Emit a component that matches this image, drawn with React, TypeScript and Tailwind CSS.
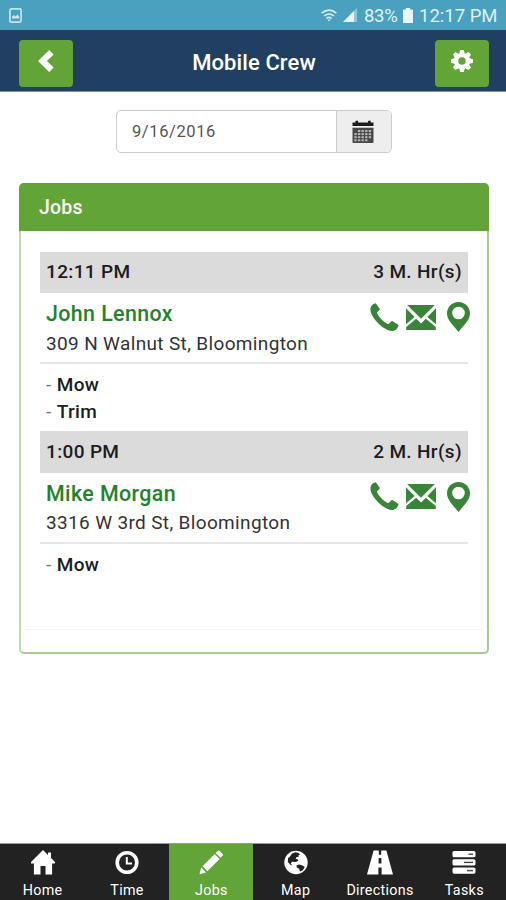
import type { ReactNode } from "react";

function ChevronLeft() {
  return (
    <svg width="16" height="22" viewBox="0 0 16 22" fill="#fff">
      <path d="M11.200 0 15.700 4.400 8.900 11l6.800 6.600L11.200 22 0 11z" />
    </svg>
  );
}

function Gear() {
  return (
    <svg width="22" height="22" viewBox="0 0 22 22">
      <g fill="#fff">
        {[0, 45, 90, 135].map((a) => (
          <path key={a} d="M9.2 0h3.6l.9 3.5v15l-.9 3.5H9.2l-.9-3.5v-15z" transform={`rotate(${a} 11 11)`} />
        ))}
        <circle cx="11" cy="11" r="8" />
      </g>
      <circle cx="11" cy="11" r="3.7" fill="#62a437" />
    </svg>
  );
}

function Calendar() {
  return (
    <svg width="22" height="24" viewBox="0 0 22 24">
      <path d="M.5 2.4h3V.8h2.6v1.6h10V.8h2.6v1.6h2.8V6H.5z" fill="#1c1c1c" />
      <path d="M.5 7.8h21v14.4q0 .8-.8.8H1.3q-.8 0-.8-.8z" fill="#484848" />
      <g fill="#b4b4b4">
        {[0, 1, 2, 3].map((r) =>
          [0, 1, 2, 3, 4].map((c) =>
            (r === 0 && c === 0) || (r === 3 && c === 4) ? null : (
              <rect key={`${r}-${c}`} x={2.3 + c * 3.6} y={10 + r * 3.1} width="2.4" height="2" />
            ),
          ),
        )}
      </g>
    </svg>
  );
}

function Phone() {
  return (
    <svg width="29" height="29" viewBox="0 0 29 29" fill="#398439">
      <path d="M.5 5.200C1 2.600 3 .9 5 .4c.6-.2 1.100 0 1.400.5l3.100 4.700c.4.600.3 1.200-.2 1.600L7.300 8.900c-.4.400-.4.800-.2 1.300 1.800 4 6.300 8.500 10.600 10.700.5.200.9.200 1.300-.2l2.200-2.300c.5-.4 1-.5 1.500-.2l5.200 3.200c.6.400.7.900.5 1.500-.9 2.600-3 4.700-5.700 5.100-3.700.4-9.700-2.800-14.500-7.700C3.300 15.500-.1 9.500.5 5.200z" />
    </svg>
  );
}

function Mail() {
  return (
    <svg width="30" height="25" viewBox="0 0 30 25" fill="#398439">
      <path d="M1.200 0h27.600L15 13.700z" />
      <path d="M0 3.200 8.600 12 0 19.200z" />
      <path d="M30 3.200 21.400 12l8.600 7.200z" />
      <path d="M10.200 13.800 15 18.500l4.800-4.700 10 8.300V25H.2v-2.900z" />
    </svg>
  );
}

function Pin() {
  return (
    <svg width="23" height="30" viewBox="0 0 23 30" fill="#398439" fillRule="evenodd">
      <path d="M11.500 0C5 0 0 5 0 11.300 0 18 5.500 22.500 11.500 30 17.500 22.500 23 18 23 11.300 23 5 18 0 11.500 0zm0 4.700a6.300 6.300 0 1 1 0 12.600 6.300 6.300 0 0 1 0-12.600z" />
    </svg>
  );
}

function HomeIcon() {
  return (
    <svg width="24" height="25" viewBox="0 0 24 25" fill="#fff">
      <path d="M12 0l5 4.900V2.500h3v5.400l4 4.200v1.400h-2.900V24.500h-6.600V16H9.500v8.500H2.900V13.500H0v-1.400z" />
    </svg>
  );
}

function ClockIcon() {
  return (
    <svg width="24" height="25" viewBox="0 0 24 25" fill="none" stroke="#fff">
      <circle cx="12" cy="12.500" r="9.800" strokeWidth="3.600" />
      <path d="M11.800 7v6.500H17" strokeWidth="2" />
    </svg>
  );
}

function PencilIcon() {
  return (
    <svg width="24" height="25" viewBox="0 0 24 25" fill="#fff">
      <path d="M.5 24.300 2.300 17.600 7 22.400z" />
      <path d="M3.500 16.200 15.700 4l4.900 4.900L8.400 21.200z" />
      <path d="M16.700 3 19 .7q.7-.6 1.400 0l3.300 3.400q.6.700 0 1.400l-2.200 2.300z" />
    </svg>
  );
}

function GlobeIcon() {
  return (
    <svg width="24" height="25" viewBox="0 0 24 25">
      <circle cx="12" cy="12.500" r="11.700" fill="#fff" />
      <path d="M8 3.600 11.500 2.300l3 .8 1.600 1.300-1.600.7.3 1.600-2.200.3-.9 1.900 1.800.2.600 2-2.600 1-3.500-.3-1.200 1.600 1.400 1.800-1.600-.2-2.700-3 .2-4.200 1.400-.6z" fill="#222" />
      <path d="M12.600 15.200l3-.7 3.900 1.500 1.200 1.200-2 3-2.600 1.400-1-2.800-2.500-1.500z" fill="#222" />
    </svg>
  );
}

function RoadIcon() {
  return (
    <svg width="26" height="25" viewBox="0 0 26 25" fill="#fff" fillRule="evenodd">
      <path d="M6.600.5h5.200v4.300h2.400V.5h5.200L26 24.500H14.600v-7h-3.200v7H0zM11.700 8l-.2 5.500h3L14.300 8z" />
    </svg>
  );
}

function TasksIcon() {
  return (
    <svg width="24" height="25" viewBox="0 0 24 25">
      <g fill="#fff">
        <rect x=".5" y="1" width="23" height="6.300" rx="1.600" />
        <rect x=".5" y="9.200" width="23" height="6.300" rx="1.600" />
        <rect x=".5" y="17.400" width="23" height="6.300" rx="1.600" />
      </g>
      <g fill="#444">
        <rect x="16.500" y="3.500" width="4.500" height="1.400" />
        <rect x="12" y="11.700" width="9" height="1.400" />
        <rect x="15" y="19.900" width="6" height="1.400" />
      </g>
    </svg>
  );
}

function StatusBar() {
  return (
    <div className="flex h-[30px] items-center bg-[#4aa0bf] pr-[8px] pl-[9px] text-[#dff1f8]">
      <svg width="13" height="15" viewBox="0 0 13 15">
        <rect x=".9" y=".9" width="11.200" height="13.200" rx="1.500" fill="none" stroke="#c7e4ef" strokeWidth="1.700" />
        <path d="M3 10.500V8.500l2-1.500 1.500 1.500 2-2 1.700 2v2z" fill="#c7e4ef" />
      </svg>
      <svg className="ml-auto" width="16" height="13" viewBox="0 0 16 13" fill="none" stroke="#d6ecf5" strokeWidth="1.600">
        <path d="M.6 4.200Q8-2 15.400 4.200M3 7q5-4 10 0M5.300 9.500q2.700-2.200 5.400 0" />
        <path d="M6.500 10.500h3L8 12.500z" fill="#d6ecf5" stroke="none" />
      </svg>
      <svg className="ml-[6px]" width="14" height="14" viewBox="0 0 14 14">
        <path d="M14 0v14H0z" fill="#8fc6da" />
        <path d="M11 3v11H0z" fill="#e6f4fa" />
      </svg>
      <span className="ml-[7px] w-[35px] pt-[2px] text-[18.500px] leading-none tracking-[-0.300px] whitespace-nowrap">83%</span>
      <svg className="ml-[4px]" width="10" height="15" viewBox="0 0 10 15" fill="#eaf6fb">
        <path d="M3 0h4v1.500h3V15H0V1.500h3z" />
      </svg>
      <span className="ml-[6px] w-[79px] pt-[2px] text-[18.500px] leading-none whitespace-nowrap">12:17 PM</span>
    </div>
  );
}

function GreenButton({ label, children }: { label: string; children: ReactNode }) {
  return (
    <button aria-label={label} className="flex h-[47px] w-[54px] items-center justify-center rounded-[4px] bg-[#62a437] pb-[5px]">
      {children}
    </button>
  );
}

type Job = { time: string; hours: string; name: string; address: string; tasks: string[] };

const jobs: Job[] = [
  { time: "12:11 PM", hours: "3 M. Hr(s)", name: "John Lennox", address: "309 N Walnut St, Bloomington", tasks: ["Mow", "Trim"] },
  { time: "1:00 PM", hours: "2 M. Hr(s)", name: "Mike Morgan", address: "3316 W 3rd St, Bloomington", tasks: ["Mow"] },
];

function JobRow({ job }: { job: Job }) {
  return (
    <section>
      <div className="flex h-[41.5px] items-center justify-between bg-[#dbdbdb] px-[6px] text-[19px] font-medium tracking-[0.35px] text-[#1c1c1c]">
        <span>{job.time}</span>
        <span>{job.hours}</span>
      </div>
      <div className="flex h-[71px] justify-between border-b-2 border-[#e6e6e6] pl-[6px]">
        <div className="pt-[7px]">
          <div className="text-[21.4px] leading-[28px] font-medium tracking-[0.4px] text-[#23832a]">{job.name}</div>
          <div className="pt-[0.5px] text-[19px] leading-[30px] tracking-[0.35px] whitespace-nowrap text-[#333]">{job.address}</div>
        </div>
        <div className="mr-[-2px] flex h-[48px] items-center">
          <Phone />
          <div className="ml-[7px]"><Mail /></div>
          <div className="ml-[11px]"><Pin /></div>
        </div>
      </div>
      <ul className="pt-[7px] pb-[6.2px] pl-[6px] text-[19px] leading-[27px] tracking-[0.35px] text-[#1c1c1c]">
        {job.tasks.map((t) => (
          <li key={t}>
            <span className="text-[#777]">- </span>
            <span className="font-medium">{t}</span>
          </li>
        ))}
      </ul>
    </section>
  );
}

const tabs: { label: string; icon: ReactNode }[] = [
  { label: "Home", icon: <HomeIcon /> },
  { label: "Time", icon: <ClockIcon /> },
  { label: "Jobs", icon: <PencilIcon /> },
  { label: "Map", icon: <GlobeIcon /> },
  { label: "Directions", icon: <RoadIcon /> },
  { label: "Tasks", icon: <TasksIcon /> },
];

export default function App() {
  return (
    <div className="flex h-[900px] w-[506px] flex-col overflow-hidden bg-white font-['Roboto',sans-serif]">
      <StatusBar />
      <header className="flex h-[62px] items-start justify-between border-b border-[#7f90a4] bg-[#213f60] pt-[10px] pr-[17px] pl-[19px]">
        <GreenButton label="Back"><ChevronLeft /></GreenButton>
        <h1 className="pt-[9px] text-[22px] leading-[28px] font-medium tracking-[0.1px] text-white">Mobile Crew</h1>
        <GreenButton label="Settings"><Gear /></GreenButton>
      </header>

      <div className="mt-[18px] ml-[116px] flex h-[43px] w-[276px] overflow-hidden rounded-[5px] border border-[#ccc]">
        <div className="flex-1 pl-[15px] text-[16.5px] leading-[41px] tracking-[0.6px] text-[#555]">9/16/2016</div>
        <div className="flex w-[55px] items-center justify-center border-l border-[#ccc] bg-[#eee] pr-[2px]">
          <Calendar />
        </div>
      </div>

      <main className="mt-[30px] mr-[17px] ml-[19px] flex h-[471px] flex-col rounded-[5px] border-2 border-[#a5cb8e] border-l-[#bcdab4] bg-white">
        <h2 className="-mx-[2px] -mt-[2px] h-[48px] rounded-t-[5px] bg-[#62a437] pl-[20px] text-[19.5px] leading-[50px] font-medium tracking-[0.2px] text-white">Jobs</h2>
        <div className="mx-[19px] mt-[20.6px] flex-1">
          {jobs.map((j) => (
            <JobRow key={j.name} job={j} />
          ))}
        </div>
        <div className="mx-[4px] mb-[22px] h-px bg-[#f4f4f4]" />
      </main>

      <nav className="mt-auto grid h-[57px] grid-cols-6 border-t border-[#999] bg-[#222]">
        {tabs.map((t) => (
          <div
            key={t.label}
            className={`flex flex-col items-center pt-[6px] pl-[1px] text-white ${t.label === "Jobs" ? "bg-[#62a437]" : ""}`}
          >
            {t.icon}
            <span className="mt-[5px] text-[14.3px] leading-[20px] tracking-[0.3px]">{t.label}</span>
          </div>
        ))}
      </nav>
    </div>
  );
}
